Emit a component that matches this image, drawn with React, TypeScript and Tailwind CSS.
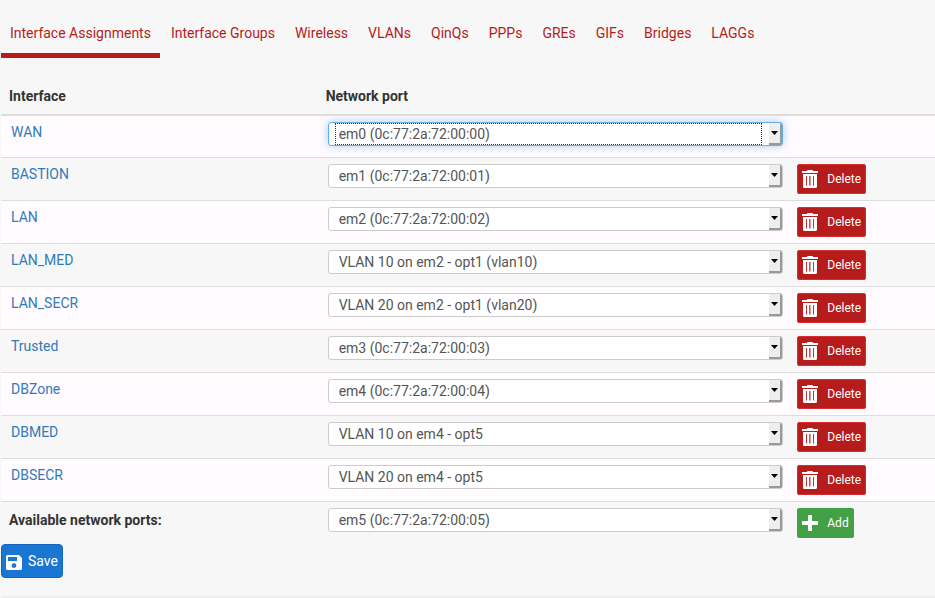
import React from "react";

type Port = { name: string; port: string };

const tabs = [
  "Interface Assignments",
  "Interface Groups",
  "Wireless",
  "VLANs",
  "QinQs",
  "PPPs",
  "GREs",
  "GIFs",
  "Bridges",
  "LAGGs",
];

const interfaces: Port[] = [
  { name: "WAN", port: "em0 (0c:77:2a:72:00:00)" },
  { name: "BASTION", port: "em1 (0c:77:2a:72:00:01)" },
  { name: "LAN", port: "em2 (0c:77:2a:72:00:02)" },
  { name: "LAN_MED", port: "VLAN 10 on em2 - opt1 (vlan10)" },
  { name: "LAN_SECR", port: "VLAN 20 on em2 - opt1 (vlan20)" },
  { name: "Trusted", port: "em3 (0c:77:2a:72:00:03)" },
  { name: "DBZone", port: "em4 (0c:77:2a:72:00:04)" },
  { name: "DBMED", port: "VLAN 10 on em4 - opt5" },
  { name: "DBSECR", port: "VLAN 20 on em4 - opt5" },
];

const ports = [...interfaces.map((i) => i.port), "em5 (0c:77:2a:72:00:05)"];

function TrashIcon() {
  return (
    <svg width="16" height="18" viewBox="0 0 16 18" fill="none" aria-hidden="true">
      <path fill="#fff" d="M5.500 0h5l.5 1h5v2H0V1h5zM1 4h14v12.500a1.500 1.500 0 0 1-1.500 1.500h-11A1.500 1.500 0 0 1 1 16.500z" />
      <path stroke="#b71c1c" strokeOpacity=".9" d="M4.500 6v9.500M11.500 6v9.500" />
      <path stroke="#b71c1c" strokeOpacity=".75" d="M7.500 6v9.500" />
      <path stroke="#b71c1c" strokeOpacity=".45" d="M8.500 6v9.500" />
    </svg>
  );
}

function PlusIcon() {
  return (
    <svg width="16" height="16" viewBox="0 0 16 16" fill="#fff" aria-hidden="true">
      <path d="M6.500 0h3l.5.500V6h5.500l.5.500v3l-.5.500H10v5.500l-.5.500h-3l-.5-.5V10H.5L0 9.500v-3L.5 6H6V.5z" />
    </svg>
  );
}

function SaveIcon() {
  return (
    <svg width="16" height="17" viewBox="0 -2 16 17" aria-hidden="true">
      <path
        fill="#fff"
        fillRule="evenodd"
        d="M1.500 0H13l3 3v10.500a1.500 1.500 0 0 1-1.500 1.500h-13A1.500 1.500 0 0 1 0 13.500v-12A1.500 1.500 0 0 1 1.500 0zM2 2v4h9V2zM8 8.200a2.400 2.400 0 1 0 0 4.800 2.400 2.400 0 0 0 0-4.800z"
      />
    </svg>
  );
}

function PortSelect({ label, value, active = false }: { label: string; value: string; active?: boolean }) {
  return (
    <div
      className={
        "relative h-6 rounded-[3px] border bg-white " +
        (active ? "border-[#66afe9] shadow-[0_0_8px_rgba(102,175,233,0.6)]" : "border-[#cccccc]")
      }
    >
      <select
        aria-label={label}
        defaultValue={value}
        className="block h-full w-full appearance-none bg-transparent pr-6 pl-[10px] text-sm text-[#555555] outline-none"
      >
        {ports.map((p) => (
          <option key={p}>{p}</option>
        ))}
      </select>
      {active && (
        <span className="pointer-events-none absolute inset-y-0 right-5 left-[6px] border border-dotted border-[#333333]" />
      )}
      <span className="pointer-events-none absolute inset-y-0 right-0 flex w-[13px] items-center justify-center rounded-r-[2px] border-r-2 border-b-2 border-[#999999] bg-[#eeeeee]">
        <svg width="7" height="4" viewBox="0 0 7 4" aria-hidden="true">
          <path d="M0 0h7L3.500 4z" />
        </svg>
      </span>
    </div>
  );
}

const smallButton =
  "flex h-[30px] items-center gap-[9px] rounded-[2px] border px-1 text-xs text-white";

export default function App() {
  return (
    <main className="min-h-screen bg-[#f7f7f7] pl-px font-[Roboto,sans-serif] text-sm leading-5 text-[#333333]">
      <nav className="pt-[18px]">
        <ul className="flex gap-[2px]">
          {tabs.map((tab, i) => (
            <li key={tab}>
              <a
                href="#"
                aria-current={i === 0 ? "page" : undefined}
                className={
                  "block border-b-[5px] px-[9px] pt-[5px] pb-[10px] text-[#b71c1c] " +
                  (i === 0 ? "border-[#b71c1c]" : "border-transparent")
                }
              >
                {tab}
              </a>
            </li>
          ))}
        </ul>
      </nav>
      <form onSubmit={(e) => e.preventDefault()}>
        <table className="mt-5 w-full table-fixed border-separate border-spacing-0">
          <colgroup>
            <col className="w-[33.9%]" />
            <col className="w-[50.5%]" />
            <col />
          </colgroup>
          <thead>
            <tr className="text-left *:border-b-2 *:border-[#dddddd] *:px-2 *:pt-2 *:pb-2">
              <th scope="col">Interface</th>
              <th scope="col">Network port</th>
              <td />
            </tr>
          </thead>
          <tbody>
            {interfaces.map(({ name, port }, i) => (
              <tr key={name} className="align-top *:border-b *:border-[#dddddd] odd:bg-[#fffbff]">
                <td className="px-[10px] py-[6px]">
                  <a href="#" className="text-[#337ab7]">{name}</a>
                </td>
                <td className="py-[6px] pr-[6px] pl-[10px]">
                  <PortSelect label={name + " port"} value={port} active={i === 0} />
                </td>
                <td className="h-[42px] px-2 py-[6px]">
                  {i > 0 && (
                    <button type="button" className={smallButton + " border-[#d32f2f] bg-[#b71c1c]"}>
                      <TrashIcon />
                      Delete
                    </button>
                  )}
                </td>
              </tr>
            ))}
            <tr className="align-top">
              <th scope="row" className="px-2 py-2 text-left">Available network ports:</th>
              <td className="py-[6px] pr-[6px] pl-[10px]">
                <PortSelect label="Available network ports" value="em5 (0c:77:2a:72:00:05)" />
              </td>
              <td className="px-2 py-[6px]">
                <button type="button" className={smallButton + " border-[#43a047] bg-[#43a047]"}>
                  <PlusIcon />
                  Add
                </button>
              </td>
            </tr>
          </tbody>
        </table>
        <button
          type="submit"
          className="flex h-[34px] items-center gap-[6px] rounded-[4px] border border-[#1565c0] bg-[#1976d2] px-1 text-white"
        >
          <SaveIcon />
          Save
        </button>
      </form>
      <div className="mt-[18px] h-[2px] bg-[#eeeeee]" />
    </main>
  );
}
